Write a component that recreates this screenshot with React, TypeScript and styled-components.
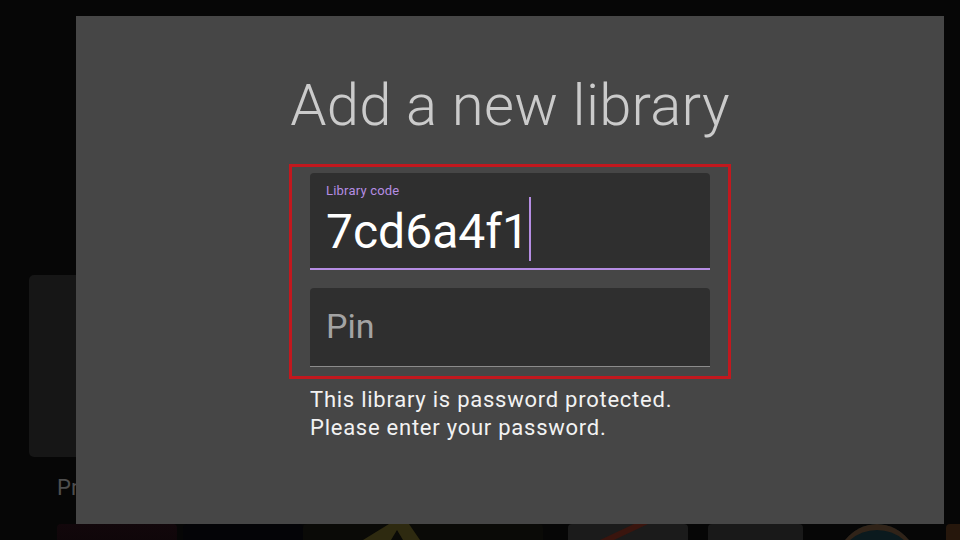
import styled, { createGlobalStyle } from "styled-components";

const GlobalStyle = createGlobalStyle`
    html, body {
        margin: 0;
        padding: 0;
        background: #060606;
        font-family: Roboto, "Liberation Sans", sans-serif;
    }
    * { box-sizing: border-box; }
`;

const Page = styled.div`
    position: relative;
    width: 960px;
    height: 540px;
    overflow: hidden;
    background: #060606;
    padding: 275px 0 0 29px;
`;

const Shelf = styled.div`
    display: flex;
    flex-direction: column;
`;

const Tile = styled.div`
    width: 200px;
    height: 182px;
    background: #161616;
    border-radius: 5px;
`;

const Caption = styled.div`
    margin: 18px 0 0 28px;
    height: 26px;
    font-size: 22px;
    line-height: 26px;
    color: #4e4e4e;
`;

const ThumbRow = styled.div`
    display: flex;
    margin-top: 23px;
    padding-left: 28px;
`;

type ThumbProps = { $w: number; $gap: number; $bg: string; $round?: boolean };
const Thumb = styled.div<ThumbProps>`
    flex: none;
    width: ${({ $w }) => $w}px;
    height: 120px;
    margin-left: ${({ $gap }) => $gap}px;
    background: ${({ $bg }) => $bg};
    border-radius: ${({ $round }) => ($round ? "50%" : "4px")};
    overflow: hidden;
    svg { display: block; }
`;

const Overlay = styled.div`
    position: absolute;
    left: 76px;
    top: 16px;
    width: 868px;
    height: 508px;
    background: #464646;
    display: flex;
    flex-direction: column;
    align-items: center;
    padding-top: 55px;
`;

const Title = styled.h1`
    margin: 0;
    font-size: 58px;
    line-height: 68px;
    font-weight: 300;
    letter-spacing: 0.25px;
    color: #cbcbcb;
`;

const FocusBox = styled.div`
    margin-top: 25px;
    width: 442px;
    border: 3px solid #c2181e;
    padding: 6px 18px 9px;
    display: flex;
    flex-direction: column;
    gap: 18px;
`;

type FieldProps = { $active?: boolean };
const Field = styled.div<FieldProps>`
    height: ${({ $active }) => ($active ? 97 : 79)}px;
    background: #2f2f2f;
    border-radius: 4px 4px 0 0;
    border-bottom: ${({ $active }) => ($active ? "2px solid #b58de3" : "1px solid #8c8c8c")};
    padding: ${({ $active }) => ($active ? "10px 16px 0" : "18px 16px 0")};
`;

const Label = styled.div`
    font-size: 13px;
    line-height: 16px;
    color: #b58de3;
    letter-spacing: 0.2px;
`;

const ValueRow = styled.div`
    display: flex;
    align-items: center;
    height: 56px;
    margin-top: 5px;
`;

const Value = styled.span`
    font-size: 48px;
    line-height: 56px;
    color: #ffffff;
`;

const Caret = styled.span`
    width: 2px;
    height: 64px;
    margin-left: 0;
    background: #b58de3;
    transform: translateY(-3px);
`;

const Placeholder = styled.div`
    font-size: 34px;
    line-height: 40px;
    color: #a3a3a3;
`;

const Help = styled.p`
    margin: 7px 0 0;
    width: 400px;
    font-size: 22px;
    line-height: 28px;
    letter-spacing: 0.75px;
    color: #f2f2f2;
    white-space: nowrap;
`;

export default function App() {
    return (
        <>
            <GlobalStyle />
            <Page>
                <Shelf>
                    <Tile />
                    <Caption>Profiles</Caption>
                    <ThumbRow>
                        <Thumb $w={120} $gap={0} $bg="linear-gradient(180deg, #12070b 0%, #080406 50%)" />
                        <Thumb $w={120} $gap={6} $bg="#040407" />
                        <Thumb $w={240} $gap={0} $bg="#0a0a07">
                            <svg width="240" height="120" viewBox="0 0 240 120">
                                <polygon points="60,16 86,0 106,0 117,16" fill="#2e2a10" />
                                <polygon points="88,16 94,6 100,16" fill="#0a0a07" />
                            </svg>
                        </Thumb>
                        <Thumb $w={120} $gap={25} $bg="#1b1b1b">
                            <svg width="120" height="120" viewBox="0 0 120 120">
                                <path d="M32 16 L66 0 L80 0 L46 16 Z" fill="#3a150e" />
                            </svg>
                        </Thumb>
                        <Thumb $w={95} $gap={20} $bg="#191919" />
                        <Thumb $w={94} $gap={27} $bg="#0b1a1e" $round>
                            <svg width="94" height="94" viewBox="0 0 94 94">
                                <circle cx="47" cy="47" r="44" fill="none" stroke="#302318" strokeWidth="6" />
                            </svg>
                        </Thumb>
                        <Thumb $w={40} $gap={22} $bg="#26170c" />
                    </ThumbRow>
                </Shelf>
                <Overlay>
                    <Title>Add a new library</Title>
                    <FocusBox>
                        <Field $active>
                            <Label>Library code</Label>
                            <ValueRow>
                                <Value>7cd6a4f1</Value>
                                <Caret />
                            </ValueRow>
                        </Field>
                        <Field>
                            <Placeholder>Pin</Placeholder>
                        </Field>
                    </FocusBox>
                    <Help>
                        This library is password protected.
                        <br />
                        Please enter your password.
                    </Help>
                </Overlay>
            </Page>
        </>
    );
}
